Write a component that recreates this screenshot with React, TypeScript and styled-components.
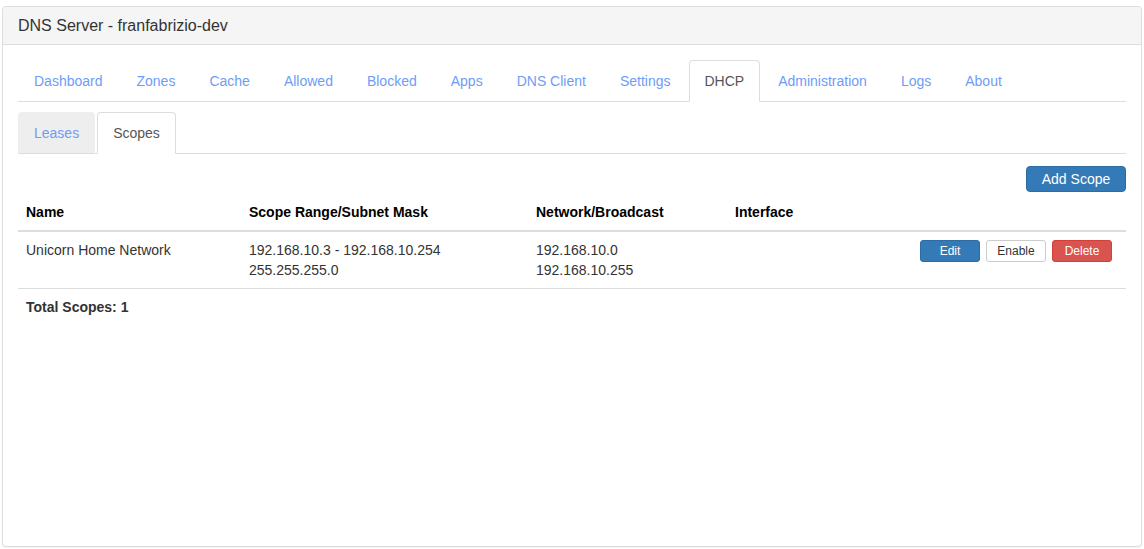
import React from "react";
import styled, { createGlobalStyle } from "styled-components";

const Global = createGlobalStyle`
  * { box-sizing: border-box; }
  body {
    margin: 0;
    font-family: "Liberation Sans", Arial, sans-serif;
    font-size: 14px;
    line-height: 20px;
    color: #333;
    background: #fff;
  }
`;

const Page = styled.div`
  padding: 6px 2px 2px 2px;
`;

const Panel = styled.div`
  border: 1px solid #ddd;
  border-radius: 4px;
  height: 541px;
  display: flex;
  flex-direction: column;
  box-shadow: 0 1px 1px rgba(0, 0, 0, 0.05);
  background: #fff;
`;

const PanelHeading = styled.div`
  background: #f5f5f5;
  border-bottom: 1px solid #ddd;
  border-radius: 3px 3px 0 0;
  padding: 10px 15px;
  font-size: 16px;
  line-height: 17px;
  color: #333;
`;

const PanelBody = styled.div`
  padding: 15px;
  flex: 1;
`;

const Tabs = styled.ul<{ $spaced?: boolean }>`
  list-style: none;
  margin: ${(p) => (p.$spaced ? "10px 0 0 0" : "0")};
  padding: 0;
  display: flex;
  border-bottom: 1px solid #ddd;
`;

const TabItem = styled.li`
  margin-bottom: -1px;
  margin-right: 2px;
`;

const TabLink = styled.a<{ $active?: boolean; $muted?: boolean }>`
  display: block;
  padding: 10px 15px;
  line-height: 20px;
  border: 1px solid transparent;
  border-radius: 4px 4px 0 0;
  text-decoration: none;
  cursor: pointer;
  color: ${(p) => (p.$active ? "#555" : "#6f9cf7")};
  background: ${(p) => (p.$active ? "#fff" : p.$muted ? "#eee" : "transparent")};
  border-color: ${(p) => (p.$active ? "#ddd #ddd transparent" : p.$muted ? "#eee #eee #ddd" : "transparent")};
`;

const Toolbar = styled.div`
  display: flex;
  justify-content: flex-end;
  margin-top: 12px;
  margin-bottom: 2px;
`;

const Button = styled.button<{ $variant: "primary" | "danger" | "default"; $small?: boolean }>`
  font-family: "Liberation Sans", Arial, sans-serif;
  font-size: ${(p) => (p.$small ? "12px" : "14px")};
  line-height: ${(p) => (p.$small ? "18px" : "20px")};
  height: ${(p) => (p.$small ? "22px" : "26px")};
  width: ${(p) => (p.$small ? "60px" : "100px")};
  padding: 0;
  border-radius: ${(p) => (p.$small ? "3px" : "4px")};
  border: 1px solid
    ${(p) => (p.$variant === "primary" ? "#2e6da4" : p.$variant === "danger" ? "#d43f3a" : "#ccc")};
  background: ${(p) =>
    p.$variant === "primary" ? "#337ab7" : p.$variant === "danger" ? "#d9534f" : "#fff"};
  color: ${(p) => (p.$variant === "default" ? "#333" : "#fff")};
  cursor: pointer;
`;

const Table = styled.table`
  width: 100%;
  border-collapse: collapse;
  border-spacing: 0;
`;

const Th = styled.th<{ $w?: number }>`
  text-align: left;
  font-weight: bold;
  color: #000;
  padding: 8px;
  line-height: 20px;
  border-bottom: 2px solid #ddd;
  width: ${(p) => (p.$w ? `${p.$w}px` : "auto")};
`;

const Td = styled.td<{ $right?: boolean }>`
  padding: 8px;
  line-height: 20px;
  vertical-align: top;
  text-align: ${(p) => (p.$right ? "right" : "left")};
`;

const Actions = styled.div`
  display: flex;
  justify-content: flex-end;
  gap: 6px;
  padding-right: 6px;
`;

const FootCell = styled.td`
  padding: 8px;
  line-height: 20px;
  font-weight: bold;
  border-top: 1px solid #ddd;
`;

const mainTabs = [
  "Dashboard",
  "Zones",
  "Cache",
  "Allowed",
  "Blocked",
  "Apps",
  "DNS Client",
  "Settings",
  "DHCP",
  "Administration",
  "Logs",
  "About",
];

export default function App() {
  return (
    <>
      <Global />
      <Page>
        <Panel>
          <PanelHeading>DNS Server - franfabrizio-dev</PanelHeading>
          <PanelBody>
            <Tabs>
              {mainTabs.map((t) => (
                <TabItem key={t}>
                  <TabLink $active={t === "DHCP"}>{t}</TabLink>
                </TabItem>
              ))}
            </Tabs>
            <Tabs $spaced>
              <TabItem>
                <TabLink $muted>Leases</TabLink>
              </TabItem>
              <TabItem>
                <TabLink $active>Scopes</TabLink>
              </TabItem>
            </Tabs>
            <Toolbar>
              <Button $variant="primary">Add Scope</Button>
            </Toolbar>
            <Table>
              <thead>
                <tr>
                  <Th $w={223}>Name</Th>
                  <Th $w={287}>Scope Range/Subnet Mask</Th>
                  <Th $w={199}>Network/Broadcast</Th>
                  <Th>Interface</Th>
                  <Th></Th>
                </tr>
              </thead>
              <tbody>
                <tr>
                  <Td>Unicorn Home Network</Td>
                  <Td>
                    192.168.10.3 - 192.168.10.254
                    <br />
                    255.255.255.0
                  </Td>
                  <Td>
                    192.168.10.0
                    <br />
                    192.168.10.255
                  </Td>
                  <Td></Td>
                  <Td $right>
                    <Actions>
                      <Button $variant="primary" $small>Edit</Button>
                      <Button $variant="default" $small>Enable</Button>
                      <Button $variant="danger" $small>Delete</Button>
                    </Actions>
                  </Td>
                </tr>
              </tbody>
              <tfoot>
                <tr>
                  <FootCell colSpan={5}>Total Scopes: 1</FootCell>
                </tr>
              </tfoot>
            </Table>
          </PanelBody>
        </Panel>
      </Page>
    </>
  );
}
